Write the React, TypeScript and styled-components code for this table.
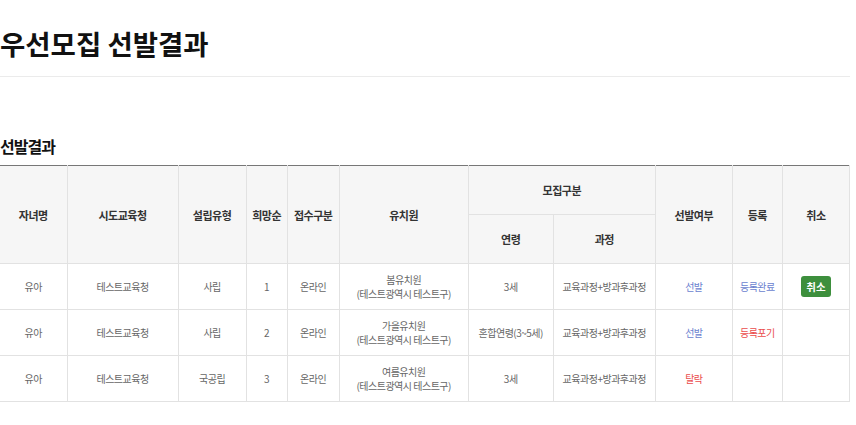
import styled, { createGlobalStyle } from "styled-components";

const GlobalStyle = createGlobalStyle`
  html, body {
    margin: 0;
    padding: 0;
    background: #fff;
    font-family: "Noto Sans CJK KR", "Noto Sans", sans-serif;
  }
`;

type Row = {
  child: string;
  office: string;
  type: string;
  rank: string;
  channel: string;
  kinder: string;
  addr: string;
  age: string;
  course: string;
  result: "선발" | "탈락";
  regist?: "등록완료" | "등록포기";
  cancel?: boolean;
};

const rows: Row[] = [
  {
    child: "유아",
    office: "테스트교육청",
    type: "사립",
    rank: "1",
    channel: "온라인",
    kinder: "봄유치원",
    addr: "(테스트광역시 테스트구)",
    age: "3세",
    course: "교육과정+방과후과정",
    result: "선발",
    regist: "등록완료",
    cancel: true,
  },
  {
    child: "유아",
    office: "테스트교육청",
    type: "사립",
    rank: "2",
    channel: "온라인",
    kinder: "가을유치원",
    addr: "(테스트광역시 테스트구)",
    age: "혼합연령(3~5세)",
    course: "교육과정+방과후과정",
    result: "선발",
    regist: "등록포기",
  },
  {
    child: "유아",
    office: "테스트교육청",
    type: "국공립",
    rank: "3",
    channel: "온라인",
    kinder: "여름유치원",
    addr: "(테스트광역시 테스트구)",
    age: "3세",
    course: "교육과정+방과후과정",
    result: "탈락",
  },
];

const widths = [67, 111, 68, 41, 52, 129, 85, 102, 77, 50, 67];

const App = () => {
  return (
    <>
      <GlobalStyle />
      <Page>
        <TitleBar>
          <Title>우선모집 선발결과</Title>
        </TitleBar>
        <Section>
          <SubTitle>선발결과</SubTitle>
          <Table>
            <colgroup>
              {widths.map((w, i) => (
                <col key={i} style={{ width: w }} />
              ))}
            </colgroup>
            <thead>
              <tr>
                <Th rowSpan={2}>자녀명</Th>
                <Th rowSpan={2}>시도교육청</Th>
                <Th rowSpan={2}>설립유형</Th>
                <Th rowSpan={2}>희망순</Th>
                <Th rowSpan={2}>접수구분</Th>
                <Th rowSpan={2}>유치원</Th>
                <Th colSpan={2}>모집구분</Th>
                <Th rowSpan={2}>선발여부</Th>
                <Th rowSpan={2}>등록</Th>
                <Th rowSpan={2}>취소</Th>
              </tr>
              <tr>
                <Th>연령</Th>
                <Th>과정</Th>
              </tr>
            </thead>
            <tbody>
              {rows.map((r, i) => (
                <tr key={i}>
                  <Td>{r.child}</Td>
                  <Td>{r.office}</Td>
                  <Td>{r.type}</Td>
                  <Td>{r.rank}</Td>
                  <Td>{r.channel}</Td>
                  <Td>
                    {r.kinder}
                    <br />
                    {r.addr}
                  </Td>
                  <Td>{r.age}</Td>
                  <Td>{r.course}</Td>
                  <Td>
                    <Status $tone={r.result === "선발" ? "blue" : "red"}>
                      {r.result}
                    </Status>
                  </Td>
                  <Td>
                    {r.regist && (
                      <Status $tone={r.regist === "등록완료" ? "blue" : "red"}>
                        {r.regist}
                      </Status>
                    )}
                  </Td>
                  <Td>{r.cancel && <CancelButton>취소</CancelButton>}</Td>
                </tr>
              ))}
            </tbody>
          </Table>
        </Section>
      </Page>
    </>
  );
};

const Page = styled.div`
  width: 850px;
`;

const TitleBar = styled.div`
  padding-top: 25px;
  height: 51px;
  border-bottom: 1px solid #ebebeb;
  box-sizing: content-box;
`;

const Title = styled.h1`
  margin: 0;
  font-size: 27.5px;
  font-weight: 700;
  line-height: 36px;
  color: #111;
  letter-spacing: 0;
`;

const Section = styled.div`
  padding-top: 57px;
`;

const SubTitle = styled.h2`
  margin: 0 0 7px;
  font-size: 16px;
  font-weight: 700;
  line-height: 24px;
  color: #111;
  letter-spacing: -1px;
`;

const Table = styled.table`
  width: 850px;
  table-layout: fixed;
  border-collapse: collapse;
  border-top: 1px solid #777;
  border-right: 1px solid #e2e2e2;
`;

const Th = styled.th`
  height: 48px;
  padding: 0;
  background: #f6f6f6;
  border: 1px solid #e2e2e2;
  border-top: 0;
  font-size: 11px;
  font-weight: 700;
  color: #333;
  text-align: center;
  letter-spacing: -0.5px;
  &:first-child {
    border-left: 0;
  }
`;

const Td = styled.td`
  height: 45px;
  padding: 0;
  border: 1px solid #e2e2e2;
  font-size: 10px;
  line-height: 14px;
  color: #666;
  text-align: center;
  letter-spacing: -0.5px;
  &:first-child {
    border-left: 0;
  }
`;

const Status = styled.span<{ $tone: "blue" | "red" }>`
  color: ${(p) => (p.$tone === "blue" ? "#6b7fcf" : "#ea4c4c")};
`;

const CancelButton = styled.button`
  width: 30px;
  height: 21px;
  padding: 0;
  border: 0;
  border-radius: 3px;
  background: #3d8f3d;
  color: #fff;
  font-family: inherit;
  font-size: 10.5px;
  font-weight: 700;
  letter-spacing: 0;
  cursor: pointer;
`;

export default App;
